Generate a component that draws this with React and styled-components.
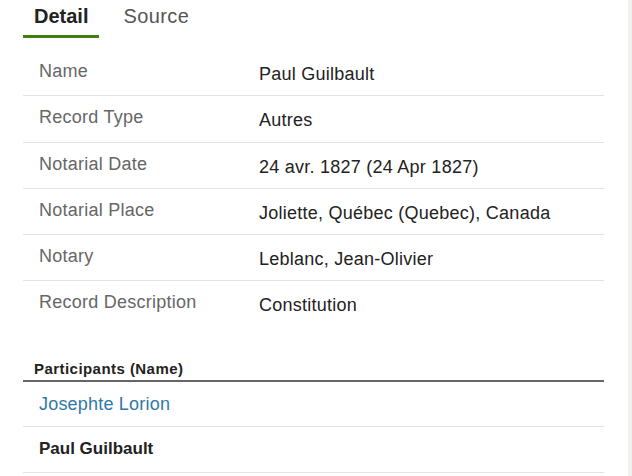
import React from "react";
import styled, { createGlobalStyle } from "styled-components";

const Global = createGlobalStyle`
  html, body { margin: 0; padding: 0; background: #fff; }
  body { font-family: "Liberation Sans", Arial, sans-serif; color: #222; }
`;

const Page = styled.div`
  width: 632px;
  height: 476px;
  overflow: hidden;
  display: flex;
  box-sizing: border-box;
`;

const Main = styled.div`
  flex: 1;
  padding-left: 23px;
`;

const Scrollbar = styled.div`
  width: 4px;
  background: #f0f0ee;
`;

const Tabs = styled.div`
  display: flex;
  gap: 13px;
  height: 38px;
`;

const Tab = styled.div`
  padding: 4px 11px 0;
  font-size: 20px;
  line-height: 24px;
  font-weight: ${(p) => (p.$active ? 700 : 400)};
  letter-spacing: ${(p) => (p.$active ? "0" : "0.4px")};
  color: ${(p) => (p.$active ? "#222" : "#555")};
  border-bottom: 3px solid ${(p) => (p.$active ? "#3f800f" : "transparent")};
  box-sizing: border-box;
  height: 38px;
`;

const Content = styled.div`
  width: 581px;
  margin-top: 12px;
`;

const Row = styled.div`
  display: grid;
  grid-template-columns: 236px 1fr;
  height: 46.25px;
  box-sizing: border-box;
  border-bottom: ${(p) => (p.$last ? "none" : "1px solid #e3e3e3")};
  font-size: 18px;
  letter-spacing: 0.25px;
  line-height: 22px;
`;

const Label = styled.div`
  padding: 10px 0 0 16px;
  color: #666;
`;

const Value = styled.div`
  padding-top: 13px;
  color: #222;
`;

const SectionHeader = styled.div`
  margin-top: 32px;
  padding: 0 0 2px 11px;
  font-size: 15px;
  letter-spacing: 0.45px;
  line-height: 18px;
  font-weight: 700;
  color: #222;
  border-bottom: 2px solid #666;
`;

const PersonRow = styled.div`
  height: ${(p) => (p.$first ? "45px" : "46px")};
  box-sizing: border-box;
  border-bottom: 1px solid #e3e3e3;
  padding: 11px 0 0 16px;
  font-size: ${(p) => (p.$bold ? "17px" : "18px")};
  letter-spacing: ${(p) => (p.$bold ? "0" : "0.2px")};
  line-height: 22px;
  font-weight: ${(p) => (p.$bold ? 700 : 400)};
  color: ${(p) => (p.$link ? "#2f78a9" : "#222")};
`;

const details = [
  ["Name", "Paul Guilbault"],
  ["Record Type", "Autres"],
  ["Notarial Date", "24 avr. 1827 (24 Apr 1827)"],
  ["Notarial Place", "Joliette, Québec (Quebec), Canada"],
  ["Notary", "Leblanc, Jean-Olivier"],
  ["Record Description", "Constitution"],
];

export default function App() {
  return (
    <>
      <Global />
      <Page>
        <Main>
          <Tabs>
            <Tab $active>Detail</Tab>
            <Tab>Source</Tab>
          </Tabs>
          <Content>
            {details.map(([l, v], i) => (
              <Row key={l} $last={i === details.length - 1}>
                <Label>{l}</Label>
                <Value>{v}</Value>
              </Row>
            ))}
            <SectionHeader>Participants (Name)</SectionHeader>
            <PersonRow $first $link>Josephte Lorion</PersonRow>
            <PersonRow $bold>Paul Guilbault</PersonRow>
          </Content>
        </Main>
        <Scrollbar />
      </Page>
    </>
  );
}
